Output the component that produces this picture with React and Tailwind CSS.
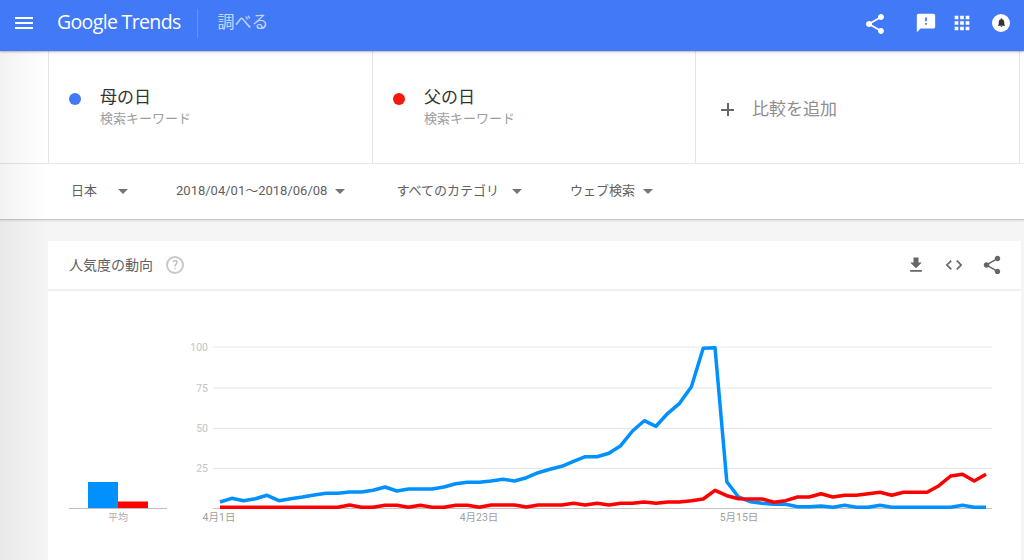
import React from "react";

const FONT = { fontFamily: "Roboto, 'Noto Sans CJK JP', sans-serif" };

const SHARE =
  "M18 16.08c-.76 0-1.44.3-1.96.77L8.91 12.7c.05-.23.09-.46.09-.7s-.04-.47-.09-.7l7.05-4.11c.54.5 1.25.81 2.04.81 1.66 0 3-1.34 3-3s-1.34-3-3-3-3 1.34-3 3c0 .24.04.47.09.7L8.04 9.81C7.5 9.31 6.79 9 6 9c-1.66 0-3 1.34-3 3s1.34 3 3 3c.79 0 1.5-.31 2.04-.81l7.12 4.16c-.05.21-.08.43-.08.65 0 1.61 1.31 2.92 2.92 2.92 1.61 0 2.92-1.31 2.92-2.92s-1.31-2.92-2.92-2.92z";
const FEEDBACK =
  "M20 2H4c-1.1 0-1.99.9-1.99 2L2 22l4-4h14c1.1 0 2-.9 2-2V4c0-1.1-.9-2-2-2zm-7 12h-2v-2h2v2zm0-4h-2V6h2v4z";
const APPS =
  "M4 8h4V4H4v4zm6 12h4v-4h-4v4zm-6 0h4v-4H4v4zm0-6h4v-4H4v4zm6 0h4v-4h-4v4zm6-10v4h4V4h-4zm-6 4h4V4h-4v4zm6 6h4v-4h-4v4zm0 6h4v-4h-4v4z";
const BELL =
  "M12 22c1.1 0 2-.9 2-2h-4c0 1.1.89 2 2 2zm6-6v-5c0-3.07-1.64-5.64-4.5-6.32V4c0-.83-.67-1.5-1.5-1.5s-1.5.67-1.5 1.5v.68C7.63 5.36 6 7.92 6 11v5l-2 2v1h16v-1l-2-2z";
const DOWNLOAD = "M19 9h-4V3H9v6H5l7 7 7-7zM5 18v2h14v-2H5z";
const CODE =
  "M9.4 16.6L4.8 12l4.6-4.6L8 6l-6 6 6 6 1.4-1.4zm5.2 0l4.6-4.6-4.6-4.6L16 6l6 6-6 6-1.4-1.4z";
const MENU = "M3 18h18v-2H3v2zm0-5h18v-2H3v2zm0-7v2h18V6H3z";

const BLUE = [
  502, 498.3, 500.7, 498.7, 495.3, 500.7, 498.7, 497, 495, 493.3, 493.3, 492, 492, 490.3, 487, 491,
  489, 489, 489, 487, 483.7, 482.3, 482.3, 481, 479.3, 481, 477.7, 472.7, 469.3, 466.3, 461.3,
  456.7, 456.7, 453.3, 445.7, 431, 420.7, 426.3, 413.3, 403.3, 386.7, 348.3, 347.7, 481.7, 497,
  501.7, 503.3, 504.3, 504.3, 506.7, 506.7, 506, 507.3, 505.3, 507.3, 507.3, 505.3, 507.3, 507.3,
  507.3, 507.3, 507.3, 507.3, 505.3, 507.3, 507.3,
];
const RED = [
  507.3, 507.3, 507.3, 507.3, 507.3, 507.3, 507.3, 507.3, 507.3, 507.3, 507.3, 505, 507.3, 507.3,
  505.3, 505.3, 507.3, 505.3, 507.3, 507.3, 505.3, 505.3, 507.3, 505, 505, 505, 507, 505, 505, 505,
  503.3, 505, 503.3, 505, 503.3, 503.3, 502, 503.3, 502, 502, 500.7, 499, 490.3, 495.7, 498.7, 499,
  499, 502.3, 500.7, 497, 497, 493.7, 497, 495.3, 495.3, 493.7, 492.3, 495.3, 492.3, 492.3, 492.3,
  485.7, 476, 474.3, 481, 474.3,
];

const toPoints = (ys) => ys.map((y, i) => `${(220 + i * 11.785).toFixed(1)},${y}`).join(" ");

function Icon({ d, size = 24, className = "" }) {
  return (
    <svg width={size} height={size} viewBox="0 0 24 24" className={className} fill="currentColor">
      <path d={d} />
    </svg>
  );
}

function Caret({ className = "" }) {
  return (
    <span className={`block w-0 h-0 border-x-[5px] border-x-transparent border-t-[5px] border-t-[#757575] ${className}`} />
  );
}

function Term({ color, name, width }) {
  return (
    <div className={`${width} shrink-0 border-l border-[#e4e4e4] flex items-center pl-[20px]`}>
      <span className="w-3 h-3 rounded-full mr-[19px] mb-[17px]" style={{ backgroundColor: color }} />
      <div>
        <div className="text-[17px] leading-[22px] text-[#333]">{name}</div>
        <div className="text-[13px] leading-[21px] text-[#9e9e9e]">検索キーワード</div>
      </div>
    </div>
  );
}

function Chart() {
  const grid = [
    [347, "100"],
    [388, "75"],
    [428.5, "50"],
    [468.5, "25"],
  ];
  return (
    <svg width="973" height="269" viewBox="48 291 973 269" className="block">
      {grid.map(([y, label]) => (
        <g key={label}>
          <line x1="213" x2="992" y1={y} y2={y} stroke="#e6e6e6" strokeWidth="1" />
          <text x="208" y={y + 3.5} textAnchor="end" fontSize="10.5" fill="#c4c4c4">
            {label}
          </text>
        </g>
      ))}
      <line x1="213" x2="992" y1="508.5" y2="508.5" stroke="#c4c4c4" strokeWidth="1" />
      <polyline points={toPoints(BLUE)} fill="none" stroke="#0091ff" strokeWidth="3.5" strokeLinejoin="round" />
      <polyline points={toPoints(RED)} fill="none" stroke="#ff0000" strokeWidth="3.5" strokeLinejoin="round" />

      <rect x="88" y="482" width="30" height="26.5" fill="#0091ff" />
      <rect x="118" y="501.5" width="30" height="7" fill="#ff0000" />
      <line x1="69" x2="167" y1="508.5" y2="508.5" stroke="#bdbdbd" strokeWidth="1" />
      <text x="118" y="521" textAnchor="middle" fontSize="10" fill="#b0b0b0">
        平均
      </text>

      <text x="219" y="521" textAnchor="middle" fontSize="10.5" fill="#a0a0a0">
        4月1日
      </text>
      <text x="479" y="521" textAnchor="middle" fontSize="10.5" fill="#a0a0a0">
        4月23日
      </text>
      <text x="739" y="521" textAnchor="middle" fontSize="10.5" fill="#a0a0a0">
        5月15日
      </text>
    </svg>
  );
}

export default function App() {
  return (
    <div className="relative h-[560px] w-[1024px] overflow-hidden bg-[#f5f5f5]" style={FONT}>
      {/* left edge fade */}
      <div className="absolute left-0 top-[51px] bottom-0 w-[48px] bg-gradient-to-r from-black/[0.05] to-transparent z-10 pointer-events-none" />

      <header className="relative z-20 h-[51px] bg-[#4279f7] shadow-[0_1px_2px_rgba(0,0,0,0.3)] flex items-center text-white">
        <Icon d={MENU} size={24} className="ml-[12px] mb-[6px]" />
        <span className="ml-[21px] mb-[7px] text-[19.5px] tracking-[-0.65px] leading-none" style={{ fontFamily: "'Open Sans', sans-serif" }}>
          Google Trends
        </span>
        <span className="ml-[16px] mb-[5px] w-px h-[29px] bg-white/20" />
        <span className="ml-[20px] text-[17px] text-white/70 mb-[6px]">調べる</span>
        <div className="ml-auto flex items-center mb-[3px]">
          <Icon d={SHARE} size={24} />
          <Icon d={FEEDBACK} size={22} className="ml-[28px] mb-[2px]" />
          <Icon d={APPS} size={22} className="ml-[14px] mb-[3px]" />
          <span className="ml-[19px] mr-[14px] mb-[3px] w-[18px] h-[18px] rounded-full bg-white flex items-center justify-center text-[#333]">
            <Icon d={BELL} size={11} />
          </span>
        </div>
      </header>

      <section className="bg-white h-[112px] flex pl-[48px]">
        <Term color="#4279f7" name="母の日" width="w-[324px]" />
        <Term color="#f4190f" name="父の日" width="w-[323px]" />
        <div className="w-[325px] shrink-0 border-x border-[#e4e4e4] flex items-center pl-[25px] pt-[5px] text-[#8e8e8e]">
          <span className="relative w-[13px] h-[13px] mr-[18px]">
            <span className="absolute left-0 right-0 top-[6px] h-[1.5px] bg-[#666]" />
            <span className="absolute top-0 bottom-0 left-[6px] w-[1.5px] bg-[#666]" />
          </span>
          <span className="text-[17px]">比較を追加</span>
        </div>
      </section>

      <section className="bg-white h-[57px] border-t border-b border-t-[#e6e6e6] border-b-[#c8c8c8] shadow-[0_1px_2px_rgba(0,0,0,0.1)] flex items-center text-[13px] text-[#616161] pb-[1px]">
        <span className="ml-[71px]">日本</span>
        <Caret className="ml-[21px]" />
        <span className="ml-[48px]">2018/04/01〜2018/06/08</span>
        <Caret className="ml-[8px]" />
        <span className="ml-[51px]">すべてのカテゴリ</span>
        <Caret className="ml-[13px]" />
        <span className="ml-[48px]">ウェブ検索</span>
        <Caret className="ml-[8px]" />
      </section>

      <main className="ml-[48px] mr-[3px] mt-[21px] bg-white">
        <div className="h-[50px] border-b-2 border-[#f0f0f0] flex items-center pl-[21px] text-[#616161]">
          <span className="text-[14px]">人気度の動向</span>
          <span className="ml-[13px] w-[18px] h-[18px] rounded-full border-2 border-[#c8c8c8] text-[#b4b4b4] text-[12px] leading-none flex items-center justify-center">
            ?
          </span>
          <div className="ml-auto flex items-center text-[#666] mr-[18px]">
            <Icon d={DOWNLOAD} size={20} />
            <Icon d={CODE} size={20} className="ml-[18px]" />
            <Icon d={SHARE} size={22} className="ml-[17px]" />
          </div>
        </div>
        <Chart />
      </main>
    </div>
  );
}
